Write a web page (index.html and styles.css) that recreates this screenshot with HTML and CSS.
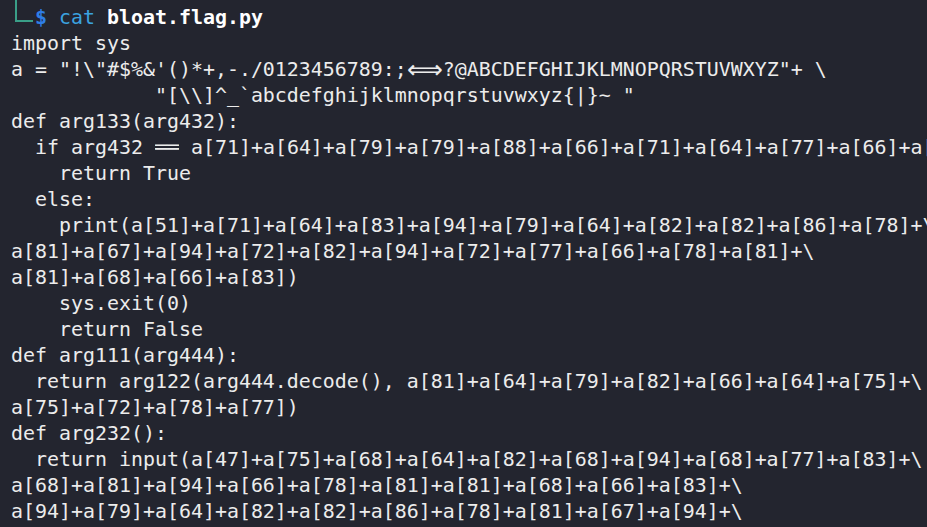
FILE: index.html
```html
<!DOCTYPE html>
<html lang="en">
<head>
<meta charset="utf-8">
<title>cat bloat.flag.py</title>
<link rel="stylesheet" href="styles.css">
</head>
<body>
<main class="term">
<div class="line prompt"><span class="corner"></span><span class="dollar">$</span> <span class="cmd">cat</span> <b class="file">bloat.flag.py</b></div>
<div class="line">import sys</div>
<div class="line">a = "!\"#$%&amp;'()*+,-./0123456789:;<span class="lig3">⟺</span>?@ABCDEFGHIJKLMNOPQRSTUVWXYZ"+ \</div>
<div class="line">            "[\\]^_`abcdefghijklmnopqrstuvwxyz{|}~ "</div>
<div class="line">def arg133(arg432):</div>
<div class="line">  if arg432 <span class="lig2">══</span> a[71]+a[64]+a[79]+a[79]+a[88]+a[66]+a[71]+a[64]+a[77]+a[66]+a[68]:</div>
<div class="line">    return True</div>
<div class="line">  else:</div>
<div class="line">    print(a[51]+a[71]+a[64]+a[83]+a[94]+a[79]+a[64]+a[82]+a[82]+a[86]+a[78]+\</div>
<div class="line">a[81]+a[67]+a[94]+a[72]+a[82]+a[94]+a[72]+a[77]+a[66]+a[78]+a[81]+\</div>
<div class="line">a[81]+a[68]+a[66]+a[83])</div>
<div class="line">    sys.exit(0)</div>
<div class="line">    return False</div>
<div class="line">def arg111(arg444):</div>
<div class="line">  return arg122(arg444.decode(), a[81]+a[64]+a[79]+a[82]+a[66]+a[64]+a[75]+\</div>
<div class="line">a[75]+a[72]+a[78]+a[77])</div>
<div class="line">def arg232():</div>
<div class="line">  return input(a[47]+a[75]+a[68]+a[64]+a[82]+a[68]+a[94]+a[68]+a[77]+a[83]+\</div>
<div class="line">a[68]+a[81]+a[94]+a[66]+a[78]+a[81]+a[81]+a[68]+a[66]+a[83]+\</div>
<div class="line">a[94]+a[79]+a[64]+a[82]+a[82]+a[86]+a[78]+a[81]+a[67]+a[94]+\</div>
</main>
</body>
</html>
```
FILE: styles.css
```css
html, body {
  margin: 0;
  padding: 0;
  background: #23252f;
  height: 100%;
  overflow: hidden;
}

.term {
  padding: 5px 0 0 11px;
  font-family: "DejaVu Sans Mono", "Liberation Mono", monospace;
  font-size: 19.93px;
  line-height: 26px;
  color: #ececec;
  overflow: hidden;
  height: 100%;
  box-sizing: border-box;
}

.line {
  height: 26px;
  white-space: pre;
}

.corner {
  display: inline-block;
  box-sizing: border-box;
  width: 18px;
  height: 22px;
  margin: -5px 2px 0 4px;
  border-left: 2px solid #3a9f88;
  border-bottom: 2px solid #3a9f88;
  vertical-align: top;
}

.dollar {
  color: #2f7ee6;
  font-weight: bold;
}

.cmd {
  color: #3ba3e0;
}

.file {
  color: #ffffff;
  font-weight: bold;
}

.lig3 {
  display: inline-block;
  width: 36px;
  text-align: center;
  vertical-align: top;
  font-size: 25px;
  line-height: 26px;
  height: 26px;
}

.lig2 {
  display: inline-block;
  width: 24px;
  overflow: hidden;
  vertical-align: top;
}
```
